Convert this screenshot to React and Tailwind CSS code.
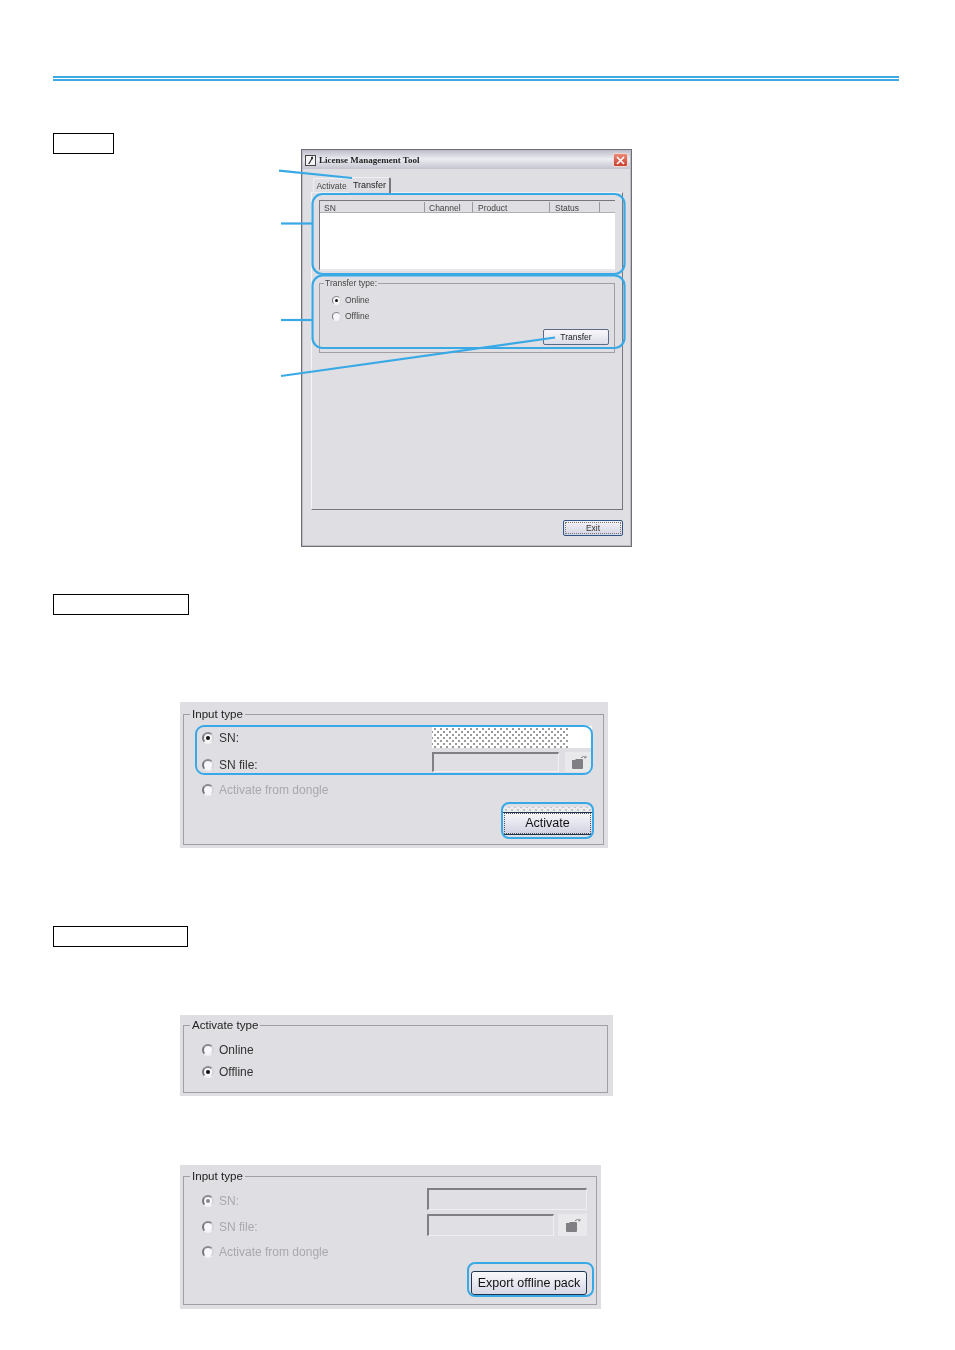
import React from "react";

const ui = "font-['Liberation_Sans',Arial,sans-serif]";

function Radio({ on, dim }) {
  return (
    <span className="relative inline-flex h-[12px] w-[12px] shrink-0 items-center justify-center rounded-full border-[2px] border-t-[#8a8a8e] border-l-[#77777b] border-r-[#d6d6da] border-b-[#f2f2f4] bg-[#f8f8fa]">
      {on && <span className={"h-[4px] w-[4px] rounded-full " + (dim ? "bg-[#8a8a8e]" : "bg-[#111]")} />}
    </span>
  );
}

function Option({ label, on, dim, className = "" }) {
  return (
    <div className={"flex items-center gap-[5px] " + className}>
      <Radio on={on} dim={dim} />
      <span className={dim ? "text-[12px] text-[#a9a9ad]" : "text-[12px] text-[#333]"}>{label}</span>
    </div>
  );
}

function SmallOption({ label, on }) {
  return (
    <div className="flex h-[10px] items-center gap-[4px]">
      <span className="inline-flex h-[9px] w-[9px] shrink-0 items-center justify-center rounded-full border border-t-[#8a8a8e] border-l-[#77777b] border-r-[#d6d6da] border-b-[#f2f2f4] bg-[#f8f8fa]">
        {on && <span className="h-[3px] w-[3px] rounded-full bg-[#111]" />}
      </span>
      <span className="text-[8.5px] text-[#444]">{label}</span>
    </div>
  );
}

function Folder() {
  return (
    <svg width="16" height="15" viewBox="0 0 16 15" fill="none">
      <path d="M1 5 h3 l1 -1 h6 a1 1 0 0 1 1 1 v8 a1 1 0 0 1 -1 1 H2 a1 1 0 0 1 -1 -1 z" fill="#808084" />
      <path d="M10 2.8 Q12.5 0.2 15 2.6" stroke="#808084" strokeWidth="1" fill="none" />
      <path d="M15 2.8 l-2 0 M15 2.8 l0 -2" stroke="#808084" strokeWidth="0.8" />
    </svg>
  );
}

function FieldBox({ className = "" }) {
  return (
    <div className={"border-t-[2px] border-l-[2px] border-r border-b border-t-[#808084] border-l-[#808084] border-r-[#f0f0f2] border-b-[#f0f0f2] bg-[#e0e0e4] " + className} />
  );
}

function Ring({ className }) {
  return <div className={"pointer-events-none absolute border-[2px] border-[#39a9e6] " + className} />;
}

function Tag({ className }) {
  return <div className={"h-[21px] border border-black " + className} />;
}

function Win() {
  return (
    <div className={"ml-[187px] mt-[16px] flex h-[398px] w-[331px] flex-col border border-[#6e6e76] bg-[#dfdfe3] p-px shadow-[inset_0_0_0_1px_#bcbcc2] blur-[0.3px] " + ui}>
      {/* title bar */}
      <div className="flex h-[18px] items-center bg-[linear-gradient(180deg,#c2c2ce_0%,#ececf2_45%,#c4c4d0_100%)] pl-[2px] pr-[2px]">
        <svg width="11" height="11" viewBox="0 0 11 11" className="shrink-0">
          <rect x="0.5" y="0.5" width="10" height="10" fill="#f4f4f4" stroke="#444" />
          <path d="M3 9 L6 4 L6 2 L8 1.5 L8 4 L7 4.5 L4.5 9 Z" fill="#333" />
        </svg>
        <span className="ml-[3px] pt-[1px] font-['Liberation_Serif',serif] text-[9px] font-bold text-[#222]">
          License Management Tool
        </span>
        <div className="ml-auto flex h-[14px] w-[15px] items-center justify-center rounded-[2px] border border-[#f3d6d0] bg-[linear-gradient(180deg,#e88a78,#c8402f)]">
          <svg width="9" height="9" viewBox="0 0 9 9">
            <path d="M1 1 L8 8 M8 1 L1 8" stroke="#fff" strokeWidth="1.6" />
          </svg>
        </div>
      </div>
      {/* body */}
      <div className="flex flex-1 flex-col pl-[8px] pr-[7px]">
        <div className="mt-[7px] flex h-[16px] items-end pl-[2px]">
          <div className="flex h-[14px] w-[36px] items-center justify-center rounded-t-[2px] border-t border-l border-[#f0f0f2] pt-[1px] text-[8.5px] text-[#444]">
            Activate
          </div>
          <div className="z-10 -mb-px flex h-[16px] w-[42px] items-center justify-center rounded-t-[2px] border-t border-r-[2px] border-t-[#f0f0f2] border-r-[#77777d] bg-[#dfdfe3] pl-[1px] text-[9px] text-[#222]">
            Transfer
          </div>
        </div>
        <div className="flex h-[318px] w-[312px] flex-col border border-t-[#f0f0f2] border-l-[#f4f4f6] border-r-[#77777d] border-b-[#77777d] pl-[7px] pr-[6px] pt-[7px]">
          <div className="h-[71px] w-[296px] border-t border-l border-b-[2px] border-[#77777d] border-b-[#e8e8ea] bg-white">
            <div className="flex h-[12px] border-b border-[#b0b0b4] bg-[#dfdfe3] pt-[1px] text-[8.5px] leading-[12px] text-[#444]">
              <div className="w-[105px] border-r border-[#9a9a9e] pl-[4px]">SN</div>
              <div className="w-[48px] border-r border-[#9a9a9e] pl-[4px]">Channel</div>
              <div className="w-[77px] border-r border-[#9a9a9e] pl-[5px]">Product</div>
              <div className="w-[50px] border-r border-[#9a9a9e] pl-[5px]">Status</div>
            </div>
          </div>
          <fieldset className="mt-[5px] h-[77px] w-[296px] border border-[#a0a0a4] pl-[12px] pr-[5px]">
            <legend className="-ml-[8px] px-[1px] text-[8.5px] leading-[14px] text-[#444]">Transfer type:</legend>
            <div className="flex flex-col gap-[6px] pt-[5px]">
              <SmallOption on label="Online" />
              <SmallOption label="Offline" />
            </div>
            <div className="mt-[8px] flex justify-end">
              <div className="flex h-[16px] w-[66px] items-center justify-center rounded-[2px] border border-[#5a6a86] bg-[linear-gradient(180deg,#f8f8fb,#dcdce8)] text-[8.5px] text-[#222]">
                Transfer
              </div>
            </div>
          </fieldset>
        </div>
        <div className="flex flex-1 items-center justify-end">
          <div className="flex h-[16px] w-[60px] items-center justify-center rounded-[2px] border border-[#2e5585] bg-[linear-gradient(180deg,#f4f4f8,#d4d4e4)] pt-[1px] text-[8.5px] text-[#333] outline-1 -outline-offset-3 outline-dotted outline-[#777]">
            Exit
          </div>
        </div>
      </div>
    </div>
  );
}

const dots =
  "bg-white bg-[radial-gradient(circle,#98989c_0.7px,transparent_1.1px),radial-gradient(circle,#98989c_0.7px,transparent_1.1px)] bg-[length:6px_6px] bg-[position:0_0,3px_3px]";

function PanelActivate() {
  return (
    <div className={"relative ml-[127px] mt-[87px] h-[146px] w-[428px] bg-[#dfdfe3] px-[3px] pt-[5px] " + ui}>
      <fieldset className="h-[138px] w-[421px] border border-[#a0a0a4] pl-[18px] pr-[11px] blur-[0.3px]">
        <legend className="-ml-[12px] px-[2px] text-[11.6px] leading-[14px] text-[#222]">Input type</legend>
        <div className="mt-[5px] flex h-[22px] items-center justify-between">
          <Option on label="SN:" className="translate-y-[1px]" />
          <div className="h-[22px] w-[160px] bg-white">
            <div className={"h-full w-[136px] " + dots} />
          </div>
        </div>
        <div className="mt-[4px] flex h-[20px] items-center">
          <Option label="SN file:" className="translate-y-[3px]" />
          <FieldBox className="ml-auto h-[20px] w-[127px]" />
          <div className="ml-[6px] flex h-[20px] w-[27px] items-center justify-center bg-[#e9e9ec]">
            <Folder />
          </div>
        </div>
        <Option dim label="Activate from dongle" className="mt-[9px]" />
        <div className={"ml-auto mt-[8px] h-[5px] w-[89px] opacity-40 " + dots} />
        <div className="flex justify-end">
          <div className="flex h-[23px] w-[89px] items-center justify-center border-y border-y-[#1f3552] bg-[linear-gradient(180deg,#f6f6fa,#d2d2e2)] text-[12.5px] text-[#111] outline-1 -outline-offset-2 outline-dotted outline-[#555]">
            Activate
          </div>
        </div>
      </fieldset>
      <Ring className="left-[15px] top-[23px] h-[50px] w-[398px] rounded-[9px]" />
      <Ring className="left-[321px] top-[100px] h-[37px] w-[93px] rounded-[8px]" />
    </div>
  );
}

function PanelType() {
  return (
    <div className={"ml-[127px] mt-[68px] h-[81px] w-[433px] bg-[#dfdfe3] px-[3px] pt-[3px] " + ui}>
      <fieldset className="h-[75px] w-[425px] border border-[#a0a0a4] pl-[18px] blur-[0.3px]">
        <legend className="-ml-[12px] px-[2px] text-[11.6px] leading-[14px] text-[#222]">Activate type</legend>
        <div className="mt-[11px] flex flex-col gap-[8px]">
          <Option label="Online" className="h-[14px]" />
          <Option on label="Offline" className="h-[14px]" />
        </div>
      </fieldset>
    </div>
  );
}

function PanelExport() {
  return (
    <div className={"relative ml-[127px] mt-[69px] h-[144px] w-[421px] bg-[#dfdfe3] px-[3px] pt-[4px] " + ui}>
      <fieldset className="h-[136px] w-[414px] border border-[#a0a0a4] pl-[18px] pr-[9px] blur-[0.3px]">
        <legend className="-ml-[12px] px-[2px] text-[11.6px] leading-[14px] text-[#222]">Input type</legend>
        <div className="mt-[5px] flex h-[22px] items-center justify-between">
          <Option dim on label="SN:" className="translate-y-[2px]" />
          <FieldBox className="h-[22px] w-[160px]" />
        </div>
        <div className="mt-[4px] flex h-[22px] items-center">
          <Option dim label="SN file:" className="translate-y-[2px]" />
          <FieldBox className="ml-auto h-[22px] w-[127px]" />
          <div className="ml-[4px] flex h-[22px] w-[29px] items-center justify-center bg-[#e9e9ec]">
            <Folder />
          </div>
        </div>
        <Option dim label="Activate from dongle" className="mt-[7px]" />
        <div className="mt-[10px] flex justify-end">
          <div className="flex h-[24px] w-[116px] items-center justify-center rounded-[3px] border border-[#1f3552] bg-[linear-gradient(180deg,#f8f8fb,#d8d8e6)] text-[12.5px] text-[#111]">
            Export offline pack
          </div>
        </div>
      </fieldset>
      <Ring className="left-[287px] top-[97px] h-[35px] w-[127px] rounded-[8px]" />
    </div>
  );
}

export default function App() {
  return (
    <div className="relative h-[1350px] w-[955px] overflow-hidden bg-white pl-[53px] pt-[76px]">
      <div className="flex w-[846px] flex-col gap-[1px]">
        <div className="h-[2px] bg-[#3fa9e6]" />
        <div className="h-[2px] bg-[#3fa9e6]" />
      </div>

      <div className="mt-[52px] flex items-start">
        <Tag className="w-[61px]" />
        <Win />
      </div>

      <Tag className="mt-[47px] w-[136px]" />
      <PanelActivate />

      <Tag className="mt-[78px] w-[135px]" />
      <PanelType />
      <PanelExport />

      {/* callouts over the window */}
      <svg className="pointer-events-none absolute left-0 top-0" width="955" height="600" fill="none">
        <rect x="312.5" y="194" width="312" height="80" rx="10" stroke="#39a9e6" strokeWidth="2.2" />
        <rect x="312.5" y="275.5" width="312" height="72.5" rx="10" stroke="#39a9e6" strokeWidth="2.2" />
        <path d="M279 170.7 L352 178" stroke="#39a9e6" strokeWidth="2.2" />
        <path d="M281 223.5 H312" stroke="#39a9e6" strokeWidth="2.2" />
        <path d="M281 320 H312" stroke="#39a9e6" strokeWidth="2.2" />
        <path d="M281 376 L555 337.5" stroke="#39a9e6" strokeWidth="2.2" />
      </svg>
    </div>
  );
}
